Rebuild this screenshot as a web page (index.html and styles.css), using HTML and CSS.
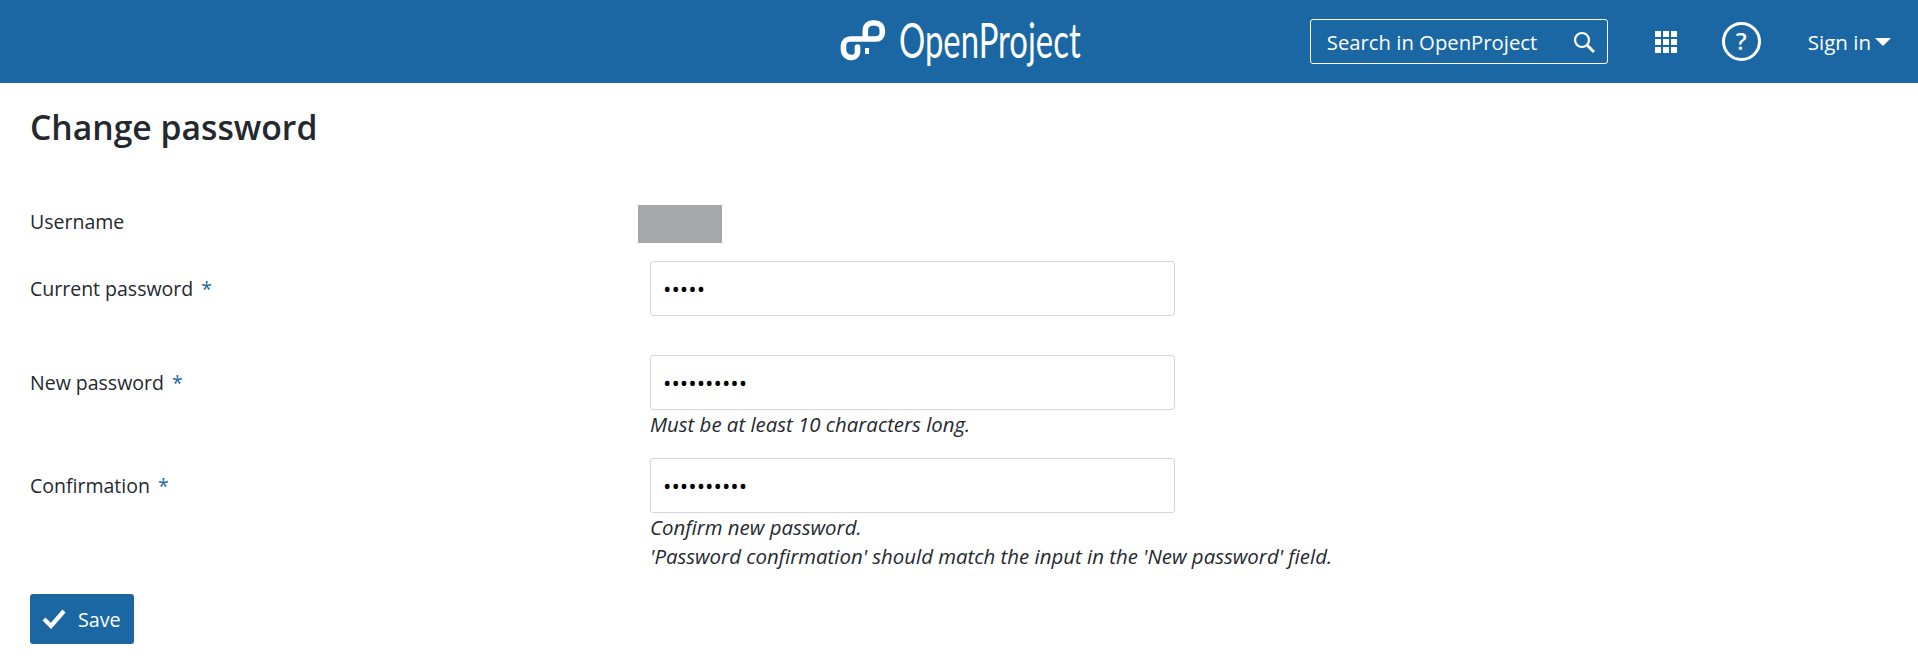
FILE: index.html
```html
<!DOCTYPE html>
<html lang="en">
<head>
<meta charset="UTF-8">
<meta name="viewport" content="width=device-width, initial-scale=1.0">
<title>Change password | OpenProject</title>
<link rel="stylesheet" href="styles.css">
</head>
<body>

    <div class="topbar">
        <div class="topbar-left"></div>
        <a href="#" class="logo">
            <svg class="logo-mark" width="46" height="42" viewBox="0 0 46 42" fill="none" stroke="#fff" stroke-width="5.6" stroke-linecap="round" stroke-linejoin="round">
                <path d="M25.3 19V10a7 7 0 0 1 7-7h3a7 7 0 0 1 7 7v3a6 6 0 0 1-6 6H10a6.5 6.5 0 0 0-6.5 6.5V30a7.5 7.5 0 0 0 7.5 7.5h1a5.5 5.5 0 0 0 5.5-5.5v-5"/>
                <path d="M27 28v6" stroke-width="4" stroke-linecap="butt"/>
            </svg>
            <span class="logo-text">OpenProject</span>
        </a>
        <div class="topbar-right">
            <div class="search-box">
                <span>Search in OpenProject</span>
                <svg width="22" height="22" viewBox="0 0 22 22" fill="none" stroke="#fff" stroke-width="2.2">
                    <circle cx="9" cy="9" r="7"/>
                    <path d="M14 14l7 7" stroke-width="3"/>
                </svg>
            </div>
            <svg class="modules-icon" width="22" height="22" viewBox="0 0 22 22" fill="#fff">
                <rect x="0" y="0" width="6" height="6"/><rect x="8" y="0" width="6" height="6"/><rect x="16" y="0" width="6" height="6"/>
                <rect x="0" y="8" width="6" height="6"/><rect x="8" y="8" width="6" height="6"/><rect x="16" y="8" width="6" height="6"/>
                <rect x="0" y="16" width="6" height="6"/><rect x="8" y="16" width="6" height="6"/><rect x="16" y="16" width="6" height="6"/>
            </svg>
            <div class="help-icon">?</div>
            <a href="#" class="sign-in">Sign in<span class="caret"></span></a>
        </div>
    </div>

    <div class="content">
        <h1>Change password</h1>

        <form class="password-form" action="#" method="post">
            <div class="form-row row-username">
                <label>Username</label>
                <div class="redacted"></div>
            </div>

            <div class="form-row row-current">
                <label for="current">Current password<span class="required">*</span></label>
                <div class="field">
                    <input type="password" id="current" value="12345">
                </div>
            </div>

            <div class="form-row row-new">
                <label for="newpass">New password<span class="required">*</span></label>
                <div class="field">
                    <input type="password" id="newpass" value="1234567890">
                    <div class="hint">Must be at least 10 characters long.</div>
                </div>
            </div>

            <div class="form-row row-confirm">
                <label for="confirm">Confirmation<span class="required">*</span></label>
                <div class="field">
                    <input type="password" id="confirm" value="1234567890">
                    <div class="hint">Confirm new password.</div>
                    <div class="hint">'Password confirmation' should match the input in the 'New password' field.</div>
                </div>
            </div>

            <button type="submit" class="save-button">
                <svg width="24" height="20" viewBox="0 0 24 20" fill="none" stroke="#fff" stroke-width="4.2">
                    <path d="M2 10l7 7L22 2"/>
                </svg>
                Save
            </button>
        </form>
    </div>

</body>
</html>
```

FILE: styles.css
```css
body {
    font-family: "Open Sans", "Noto Sans", Arial, sans-serif;
    font-size: 19.5px;
    color: #24292e;
    background-color: #ffffff;
    margin: 0;
    padding: 0;
}

.topbar {
    display: grid;
    grid-template-columns: 1fr auto 1fr;
    align-items: center;
    height: 83px;
    background-color: #1a67a3;
    color: #ffffff;
}

.logo {
    display: flex;
    align-items: center;
    gap: 13px;
    color: #ffffff;
    text-decoration: none;
}

.logo-mark {
    margin-bottom: 2px;
}

.logo-text {
    display: inline-block;
    width: 180px;
    margin-bottom: 6px;
    font-family: "Lato", sans-serif;
    font-weight: 400;
    font-size: 49px;
    line-height: 50px;
    white-space: nowrap;
    transform: scaleX(0.67);
    transform-origin: left center;
}

.topbar-right {
    display: flex;
    align-items: center;
    justify-content: flex-end;
    padding-right: 27px;
}

.search-box {
    display: flex;
    align-items: center;
    justify-content: space-between;
    box-sizing: border-box;
    width: 298px;
    height: 45px;
    padding: 0 12px 0 16px;
    border: 1px solid #ffffff;
    border-radius: 3px;
    font-size: 20.3px;
    white-space: nowrap;
}

.modules-icon {
    margin-left: 47px;
}

.help-icon {
    box-sizing: border-box;
    width: 39px;
    height: 39px;
    margin-left: 45px;
    border: 3px solid #ffffff;
    border-radius: 50%;
    font-size: 24px;
    font-weight: 600;
    line-height: 32px;
    text-align: center;
}

.sign-in {
    display: flex;
    align-items: center;
    margin-left: 47px;
    color: #ffffff;
    text-decoration: none;
    font-size: 20.5px;
    white-space: nowrap;
}

.caret {
    width: 0;
    height: 0;
    margin-left: 4px;
    border-left: 8px solid transparent;
    border-right: 8px solid transparent;
    border-top: 8px solid #ffffff;
}

.content {
    padding: 19px 30px 0;
}

h1 {
    margin: 0;
    font-size: 33.7px;
    font-weight: 600;
    line-height: 50px;
}

.password-form {
    margin-top: 53px;
}

.form-row {
    display: grid;
    grid-template-columns: 620px 1fr;
}

.form-row label {
    line-height: 55px;
}

.required {
    margin-left: 8px;
    color: #1a67a3;
}

.row-username {
    height: 38px;
    margin-bottom: 18px;
}

.row-username label {
    line-height: 34px;
}

.redacted {
    width: 84px;
    height: 38px;
    margin-left: -12px;
    background-color: #a7a8ac;
}

.row-current {
    margin-bottom: 39px;
}

.row-new {
    margin-bottom: 19px;
}

.row-confirm {
    margin-bottom: 23px;
}

input[type="password"] {
    display: block;
    box-sizing: border-box;
    width: 525px;
    height: 55px;
    padding: 0 12px;
    border: 1px solid #d3d6df;
    border-radius: 3px;
    font-family: inherit;
    font-size: 22.4px;
    color: #000000;
}

.hint {
    font-size: 20.4px;
    font-style: italic;
    line-height: 29px;
}

.save-button {
    display: flex;
    align-items: center;
    gap: 12px;
    box-sizing: border-box;
    width: 104px;
    height: 50px;
    padding: 0 12px;
    border: none;
    border-radius: 3px;
    background-color: #1a67a3;
    color: #ffffff;
    font-family: inherit;
    font-size: 19.7px;
}
```
